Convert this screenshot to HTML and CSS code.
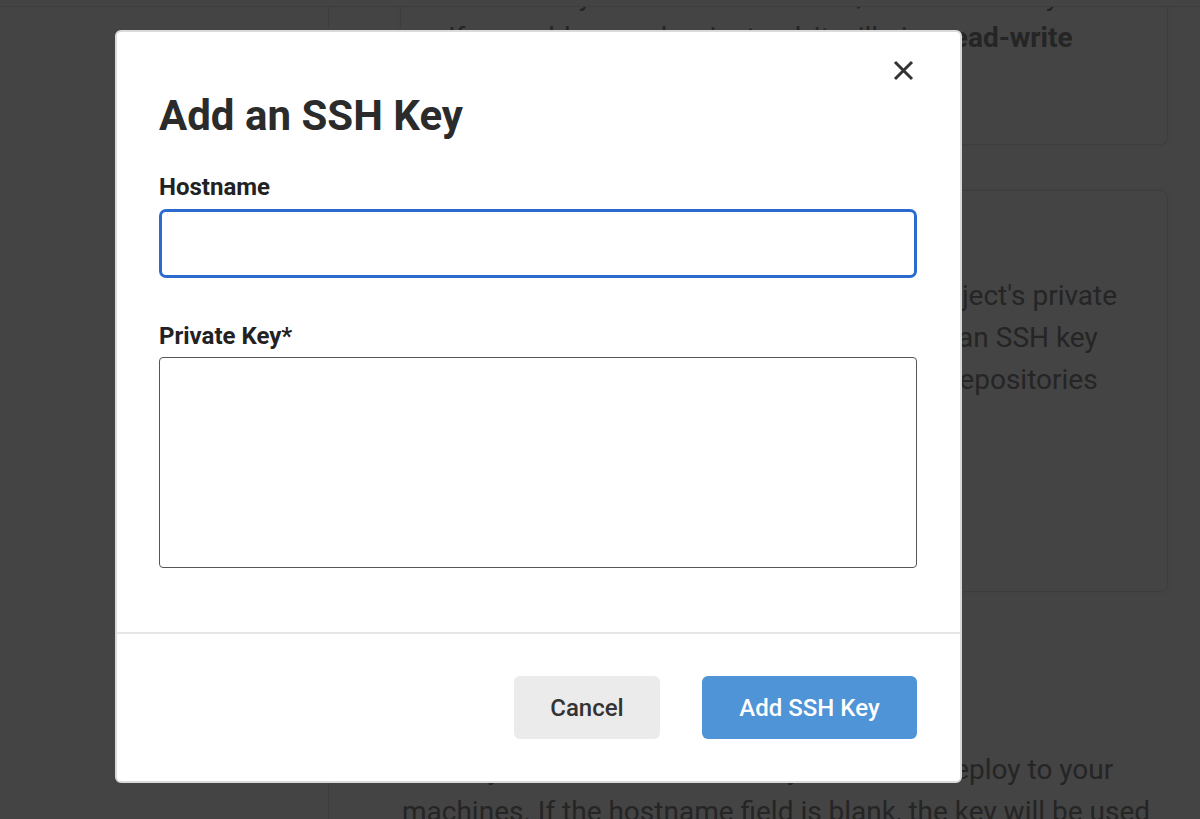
FILE: index.html
```html
<!DOCTYPE html>
<html lang="en">
<head>
<meta charset="utf-8">
<title>Add an SSH Key</title>
<link rel="stylesheet" href="styles.css">
</head>
<body>
<div class="app">
  <div class="topbar"></div>
  <div class="layout">
    <aside class="sidebar"></aside>
    <main class="content">
      <section class="card card-top">
        <p class="card-text">
          <span class="line">This is for your checkout method, and for this key</span>
          <span class="line">If you add a user key instead, it will give <b>read-write</b></span>
        </p>
      </section>
      <section class="card card-checkout">
        <h3 class="card-title">Checkout SSH keys</h3>
        <p class="card-text">
          <span class="line">These keys are used to check out this project's private</span>
          <span class="line">repository. To access other repos, create an SSH key</span>
          <span class="line">which has read access to all the needed repositories</span>
        </p>
      </section>
      <section class="extra">
        <h3 class="section-title">Additional SSH Keys</h3>
        <p class="section-text">Add keys to the build VMs that you need to deploy to your machines. If the hostname field is blank, the key will be used for all hosts.</p>
      </section>
    </main>
  </div>
</div>

<div class="overlay">
  <div class="modal" role="dialog" aria-labelledby="modal-title">
    <div class="modal-body">
      <div class="modal-head">
        <button class="close" type="button" aria-label="Close">
          <svg width="21" height="21" viewBox="0 0 21 21" aria-hidden="true">
            <path d="M2 2 L19 19 M19 2 L2 19" stroke="#333" stroke-width="3" fill="none"/>
          </svg>
        </button>
      </div>
      <h2 class="modal-title" id="modal-title">Add an SSH Key</h2>
      <label class="field-label" for="hostname">Hostname</label>
      <input class="field-input" id="hostname" type="text">
      <label class="field-label field-label-second" for="private-key">Private Key*</label>
      <textarea class="field-textarea" id="private-key"></textarea>
    </div>
    <div class="modal-footer">
      <button class="btn btn-cancel" type="button">Cancel</button>
      <button class="btn btn-primary" type="button">Add SSH Key</button>
    </div>
  </div>
</div>
</body>
</html>
```

FILE: styles.css
```css
* { box-sizing: border-box; }

html, body {
  margin: 0;
  padding: 0;
}

body {
  width: 1200px;
  height: 819px;
  overflow: hidden;
  font-family: Roboto, "Liberation Sans", Arial, sans-serif;
  background: #ffffff;
}

/* ---------- background page (scrolled) ---------- */
.app {
  height: 819px;
  overflow: hidden;
  background: #ffffff;
}

.topbar {
  position: relative;
  z-index: 1;
  height: 7px;
  background: #ffffff;
  border-bottom: 1px solid #e4e4e4;
}

.layout {
  display: grid;
  grid-template-columns: 329px 1fr;
  height: 812px;
}

.sidebar {
  border-right: 1px solid #e4e4e4;
}

.content {
  padding: 0 32px 0 71px;
}

.card {
  background: #ffffff;
  border: 1px solid #e3e3e3;
  border-radius: 8px;
  box-shadow: 0 0 8px rgba(0, 0, 0, 0.08);
}

/* first card is scrolled partly out of view under the top bar */
.card-top {
  margin-top: -42px;
  border-top: none;
  border-top-left-radius: 0;
  border-top-right-radius: 0;
  padding: 10px 47px 85px;
}

.card-checkout {
  margin-top: 45px;
  min-height: 402px;
  padding: 32px 47px 0;
}

.card-title,
.section-title {
  margin: 0;
  font-size: 28px;
  line-height: 42px;
  font-weight: 700;
  color: #8a8a8a;
}

.card-checkout .card-title {
  margin-bottom: 10px;
}

.card-text {
  margin: 0;
  font-size: 28px;
  line-height: 42px;
  color: #8a8a8a;
}

.card-text .line {
  display: block;
  white-space: nowrap;
}

.card-text b {
  font-weight: 700;
}

.extra {
  margin-top: 60px;
  padding-left: 2px;
}

.section-text {
  margin: 55px 0 0;
  font-size: 28px;
  line-height: 42px;
  color: #8a8a8a;
}

/* ---------- overlay + modal ---------- */
.overlay {
  position: fixed;
  inset: 0;
  z-index: 10;
  background: rgba(0, 0, 0, 0.733);
  padding: 30px 0 0 115px;
}

.modal {
  width: 847px;
  height: 753px;
  background: #ffffff;
  border: 2px solid #dadada;
  border-radius: 6px;
  display: flex;
  flex-direction: column;
}

.modal-body {
  flex: 1;
  display: flex;
  flex-direction: column;
  padding: 23px 43px 64px 42px;
}

.modal-head {
  display: flex;
  justify-content: flex-end;
  height: 30px;
}

.close {
  width: 30px;
  height: 30px;
  margin-right: -1px;
  padding: 0;
  border: none;
  background: transparent;
  display: flex;
  align-items: center;
  justify-content: center;
  cursor: pointer;
}

.close svg { display: block; }

.modal-title {
  margin: 6px 0 0;
  font-size: 42px;
  line-height: 50px;
  font-weight: 700;
  color: #2b2b2b;
}

.field-label {
  display: block;
  margin-top: 32px;
  font-size: 24px;
  line-height: 28px;
  font-weight: 700;
  color: #222222;
}

.field-label-second {
  margin-top: 44px;
}

.field-input {
  display: block;
  margin-top: 8px;
  width: 100%;
  height: 69px;
  border: 3px solid #2b6bd0;
  border-radius: 7px;
  background: #ffffff;
  font-family: inherit;
  font-size: 24px;
  padding: 0 16px;
  outline: none;
}

.field-textarea {
  display: block;
  margin-top: 7px;
  width: 100%;
  height: 211px;
  border: 1.5px solid #555555;
  border-radius: 4px;
  background: #ffffff;
  font-family: inherit;
  font-size: 24px;
  padding: 12px 16px;
  resize: none;
  outline: none;
}

.modal-footer {
  border-top: 2px solid #e6e6e6;
  padding: 42px 43px 42px 42px;
  display: flex;
  justify-content: flex-end;
  gap: 42px;
}

.btn {
  height: 63px;
  border: none;
  border-radius: 6px;
  font-family: inherit;
  font-size: 24px;
  font-weight: 500;
  padding: 0 35px;
  cursor: pointer;
}

.btn-cancel {
  width: 146px;
  background: #ebebeb;
  color: #333333;
}

.btn-primary {
  width: 215px;
  background: #4e94d6;
  color: #ffffff;
}
```
